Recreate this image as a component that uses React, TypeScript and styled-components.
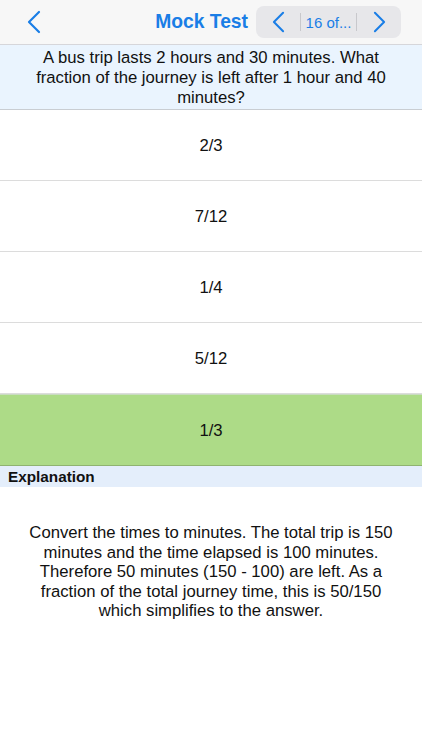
import React from "react";
import styled, { createGlobalStyle } from "styled-components";

const Global = createGlobalStyle`
  html, body { margin: 0; padding: 0; background: #ffffff; }
  body { font-family: "Liberation Sans", Arial, sans-serif; color: #111; }
  * { box-sizing: border-box; }
`;

const BLUE = "#1a7ee6";

const Page = styled.div`
  width: 422px;
  height: 750px;
  display: flex;
  flex-direction: column;
  background: #fff;
`;

const NavBar = styled.div`
  height: 45px;
  flex-shrink: 0;
  background: #f7f7f7;
  border-bottom: 1px solid #d6d6da;
  display: flex;
  align-items: center;
  padding: 0 21px 0 22px;
`;

const BackButton = styled.div`
  width: 24px;
  height: 30px;
  display: flex;
  align-items: center;
  justify-content: center;
`;

const Title = styled.div`
  flex: 1;
  text-align: right;
  padding-right: 8px;
  color: ${BLUE};
  font-weight: bold;
  font-size: 19.3px;
`;

const Segment = styled.div`
  width: 145px;
  height: 32px;
  border-radius: 8px;
  background: #e7e7ea;
  display: flex;
  align-items: center;
`;

const SegBtn = styled.div`
  width: 44px;
  height: 100%;
  display: flex;
  align-items: center;
  justify-content: center;
`;

const SegLabel = styled.div`
  flex: 1;
  height: 18px;
  border-left: 1px solid #c8c8cc;
  border-right: 1px solid #c8c8cc;
  color: ${BLUE};
  font-size: 15px;
  display: flex;
  align-items: center;
  justify-content: center;
`;

const Question = styled.div`
  height: 65px;
  flex-shrink: 0;
  background: #eaf4fe;
  border-bottom: 1px solid #c9cdd2;
  text-align: center;
  font-size: 16.7px;
  line-height: 20px;
  padding: 3px 18px 0;
  color: #111;
`;

const Option = styled.div<{ $correct?: boolean }>`
  height: ${(p) => (p.$correct ? "72px" : "71px")};
  flex-shrink: 0;
  display: flex;
  align-items: center;
  justify-content: center;
  padding-top: 2px;
  font-size: 16.7px;
  color: #111;
  background: ${(p) => (p.$correct ? "#addb87" : "#fff")};
  border-bottom: 1px solid ${(p) => (p.$correct ? "#8fb370" : "#dcdcdc")};
  border-top: ${(p) => (p.$correct ? "1px solid #c9dcc0" : "none")};
`;

const ExplHeader = styled.div`
  height: 21px;
  flex-shrink: 0;
  background: #e4eefb;
  font-weight: bold;
  font-size: 15.3px;
  line-height: 21px;
  padding-left: 8px;
  color: #111;
`;

const ExplText = styled.div`
  padding: 36px 28px 0;
  text-align: center;
  font-size: 16.7px;
  line-height: 19.6px;
  color: #111;
`;

const Chevron = ({ dir, w = 14, h = 24 }: { dir: "left" | "right"; w?: number; h?: number }) => (
  <svg width={w} height={h} viewBox="0 0 14 24" fill="none">
    <path
      d={dir === "left" ? "M12 2 L2 12 L12 22" : "M2 2 L12 12 L2 22"}
      stroke={BLUE}
      strokeWidth="2.2"
      strokeLinecap="round"
      strokeLinejoin="round"
    />
  </svg>
);

const options = ["2/3", "7/12", "1/4", "5/12", "1/3"];

export default function App() {
  return (
    <Page>
      <Global />
      <NavBar>
        <BackButton>
          <Chevron dir="left" />
        </BackButton>
        <Title>Mock Test</Title>
        <Segment>
          <SegBtn>
            <Chevron dir="left" w={13} h={22} />
          </SegBtn>
          <SegLabel>16 of...</SegLabel>
          <SegBtn>
            <Chevron dir="right" w={13} h={22} />
          </SegBtn>
        </Segment>
      </NavBar>
      <Question>
        A bus trip lasts 2 hours and 30 minutes. What fraction of the journey is left after 1 hour and 40 minutes?
      </Question>
      {options.map((o, i) => (
        <Option key={o} $correct={i === 4}>
          {o}
        </Option>
      ))}
      <ExplHeader>Explanation</ExplHeader>
      <ExplText>
        Convert the times to minutes. The total trip is 150 minutes and the time elapsed is 100 minutes. Therefore 50
        minutes (150 - 100) are left. As a fraction of the total journey time, this is 50/150 which simplifies to the
        answer.
      </ExplText>
    </Page>
  );
}
